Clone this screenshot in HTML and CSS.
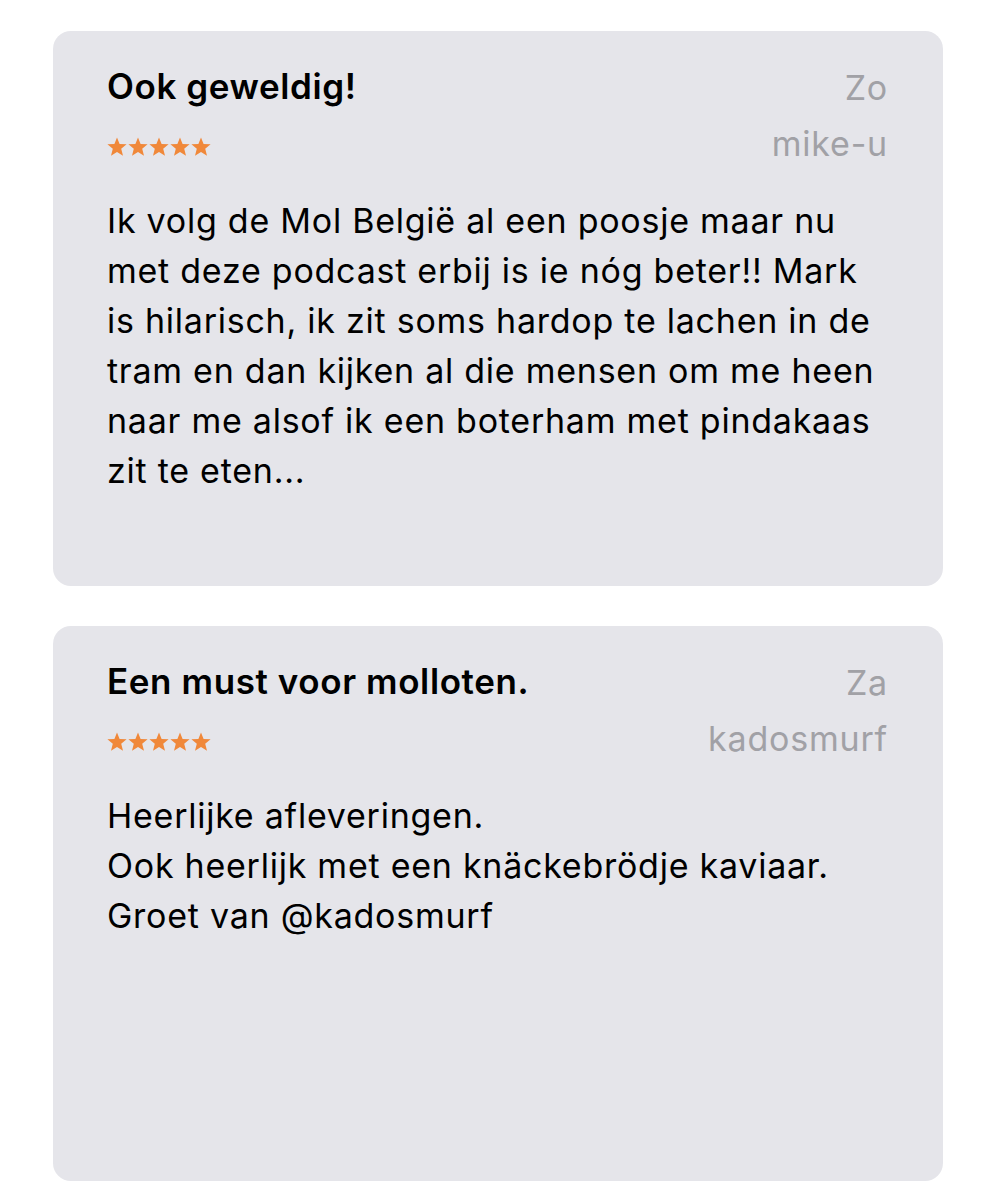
FILE: index.html
```html
<!DOCTYPE html>
<html lang="nl">
<head>
  <meta charset="UTF-8">
  <title>Beoordelingen</title>
  <link rel="stylesheet" href="styles.css">
</head>
<body>
  <div class="reviews">
    <div class="review">
      <div class="review-head">
        <div class="review-main">
          <h2 class="review-title">Ook geweldig!</h2>
          <svg class="stars" width="104" height="20" viewBox="0 0 104 20">
            <defs>
              <polygon id="star" points="10,0.5 12.6,7 19.6,7.3 14.2,11.8 16,18.8 10,14.9 4,18.8 5.8,11.8 0.4,7.3 7.4,7"/>
            </defs>
            <use href="#star" x="0"/>
            <use href="#star" x="21"/>
            <use href="#star" x="42"/>
            <use href="#star" x="63"/>
            <use href="#star" x="84"/>
          </svg>
        </div>
        <div class="review-meta">
          <span>Zo</span>
          <span>mike-u</span>
        </div>
      </div>
      <p class="review-body">Ik volg de Mol België al een poosje maar nu<br>met deze podcast erbij is ie nóg beter!! Mark<br>is hilarisch, ik zit soms hardop te lachen in de<br>tram en dan kijken al die mensen om me heen<br>naar me alsof ik een boterham met pindakaas<br>zit te eten...</p>
    </div>

    <div class="review">
      <div class="review-head">
        <div class="review-main">
          <h2 class="review-title">Een must voor molloten.</h2>
          <svg class="stars" width="104" height="20" viewBox="0 0 104 20">
            <use href="#star" x="0"/>
            <use href="#star" x="21"/>
            <use href="#star" x="42"/>
            <use href="#star" x="63"/>
            <use href="#star" x="84"/>
          </svg>
        </div>
        <div class="review-meta">
          <span>Za</span>
          <span>kadosmurf</span>
        </div>
      </div>
      <p class="review-body">Heerlijke afleveringen.<br>Ook heerlijk met een knäckebrödje kaviaar.<br>Groet van @kadosmurf</p>
    </div>
  </div>
</body>
</html>
```

FILE: styles.css
```css
body {
  margin: 0;
  background: #fff;
  font-family: Inter, "Liberation Sans", sans-serif;
  color: #000;
}

.reviews {
  display: flex;
  flex-direction: column;
  gap: 40px;
  padding: 31px 53px 0;
}

.review {
  background: #e5e5ea;
  border-radius: 18px;
  height: 555px;
  box-sizing: border-box;
  padding: 35px 55px 0 54px;
}

.review-head {
  display: flex;
  justify-content: space-between;
  align-items: flex-start;
}

.review-main {
  display: flex;
  flex-direction: column;
  align-items: flex-start;
}

.review-title {
  margin: 0;
  font-size: 35px;
  line-height: 40px;
  font-weight: 600;
  letter-spacing: 0.6px;
}

.stars {
  display: block;
  margin-top: 31px;
  fill: #f0883a;
}

.review-meta {
  display: flex;
  flex-direction: column;
  align-items: flex-end;
  gap: 16px;
  padding-top: 2px;
  font-size: 34px;
  line-height: 40px;
  letter-spacing: 0.8px;
  color: #a1a1a6;
}

.review-body {
  margin: 32px 0 0;
  font-size: 34px;
  line-height: 50px;
  letter-spacing: 0.75px;
  white-space: nowrap;
}
```
